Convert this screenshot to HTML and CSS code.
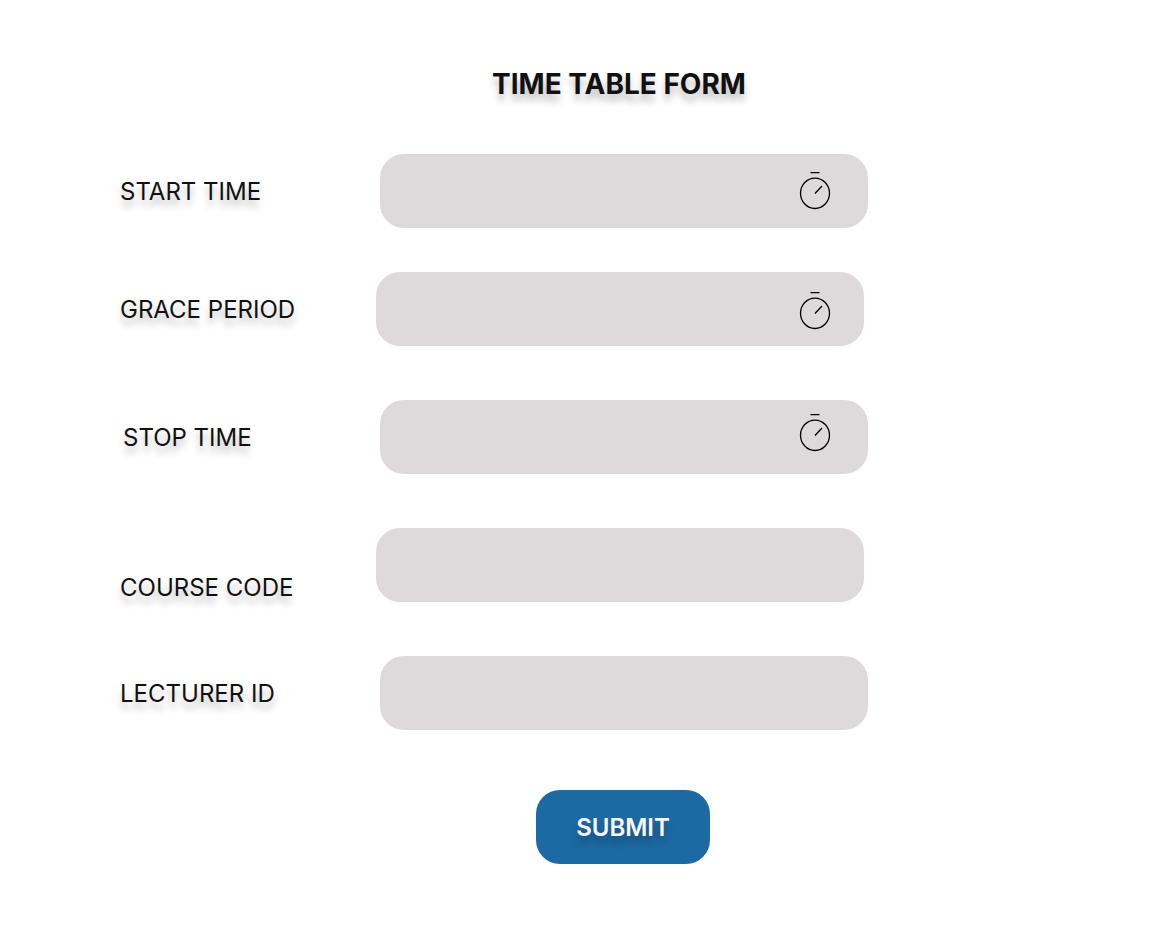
FILE: index.html
```html
<!DOCTYPE html>
<html lang="en">
<head>
<meta charset="utf-8">
<meta name="viewport" content="width=device-width, initial-scale=1">
<title>Time Table Form</title>
<link rel="stylesheet" href="styles.css">
</head>
<body>
<svg class="sprite" aria-hidden="true">
<symbol id="timer" viewBox="0 0 32 40">
<ellipse cx="16" cy="22.3" rx="14.5" ry="15.2"/>
<path d="M11.5 1.6h9M16 22.5l7-7.5"/>
</symbol>
</svg>
<main class="page">
<h1 class="title">TIME TABLE FORM</h1>
<form class="form">
<div class="row row-start">
<label class="label" for="start">START TIME</label>
<div class="field"><input class="input" id="start" type="text"><svg class="icon" aria-hidden="true"><use href="#timer"/></svg></div>
</div>
<div class="row row-grace">
<label class="label" for="grace">GRACE PERIOD</label>
<div class="field"><input class="input" id="grace" type="text"><svg class="icon" aria-hidden="true"><use href="#timer"/></svg></div>
</div>
<div class="row row-stop">
<label class="label" for="stop">STOP TIME</label>
<div class="field"><input class="input" id="stop" type="text"><svg class="icon" aria-hidden="true"><use href="#timer"/></svg></div>
</div>
<div class="row row-course">
<label class="label" for="course">COURSE CODE</label>
<div class="field"><input class="input" id="course" type="text"></div>
</div>
<div class="row row-lecturer">
<label class="label" for="lecturer">LECTURER ID</label>
<div class="field"><input class="input" id="lecturer" type="text"></div>
</div>
<button class="submit" type="submit">SUBMIT</button>
</form>
</main>
</body>
</html>
```
FILE: styles.css
```css
* {
  box-sizing: border-box;
}

body {
  margin: 0;
  background: #fff;
  color: #111;
  font-family: Inter, "Liberation Sans", sans-serif;
}

.sprite {
  display: none;
}

.page {
  max-width: 868px;
  padding: 66px 0 64px 120px;
}

.title {
  margin: 0 0 52px;
  padding-left: 250px;
  font-size: 28px;
  line-height: 36px;
  font-weight: 700;
  text-align: center;
  text-shadow: 0 7px 7px rgba(0, 0, 0, 0.25);
}

.form {
  display: flex;
  flex-direction: column;
}

.row {
  display: grid;
  grid-template-columns: 260px minmax(0, 1fr);
  align-items: center;
  margin-bottom: 54px;
}

.row-start {
  margin-bottom: 44px;
}

.row-grace,
.row-course {
  grid-template-columns: 256px minmax(0, 1fr);
  padding-right: 4px;
}

.label {
  padding-top: 2px;
  font-size: 24px;
  line-height: 28px;
  font-weight: 400;
  text-shadow: 0 7px 7px rgba(0, 0, 0, 0.25);
}

.row-stop .label {
  padding-left: 3px;
}

.row-course .label {
  padding-top: 46px;
}

.row-lecturer {
  margin-bottom: 60px;
}

.field {
  display: flex;
  align-items: center;
  height: 74px;
  padding-right: 37px;
  border-radius: 24px;
  background: #dedadb;
}

.input {
  flex: 1;
  min-width: 0;
  height: 74px;
  padding: 0 24px;
  border: 0;
  outline: 0;
  background: transparent;
  color: inherit;
  font: inherit;
  font-size: 24px;
}

.icon {
  width: 32px;
  height: 40px;
  fill: none;
  stroke: #000;
  stroke-width: 1.3;
}

.row-grace .field {
  padding-right: 33px;
}

.row-grace .icon {
  margin-top: 4px;
}

.row-stop .icon {
  margin-bottom: 8px;
}

.submit {
  align-self: center;
  height: 74px;
  padding: 2px 40px 0;
  margin-left: 258px;
  border: 0;
  border-radius: 24px;
  background: #1b6aa3;
  color: #fcf5ff;
  font: 600 24px/30px Inter, "Liberation Sans", sans-serif;
  text-shadow: 0 7px 7px rgba(0, 0, 0, 0.25);
}
```
